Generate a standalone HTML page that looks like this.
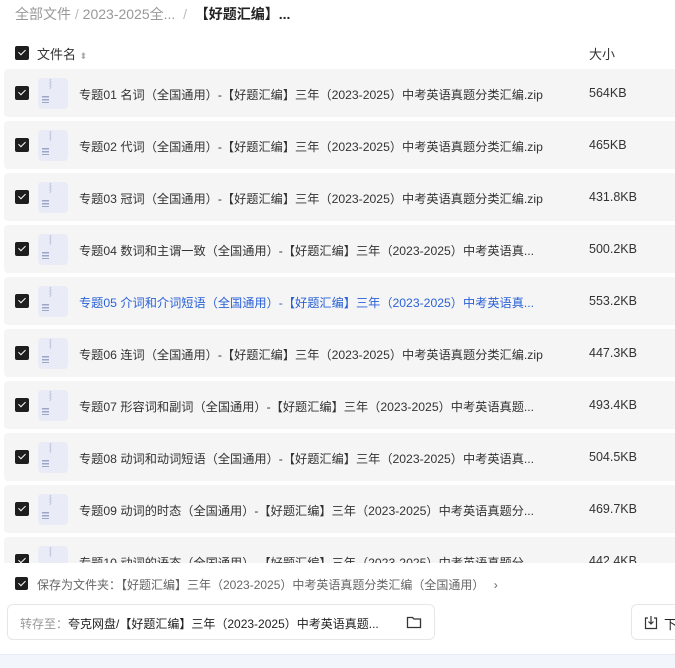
<!DOCTYPE html>
<html><head><meta charset="utf-8"><style>
*{margin:0;padding:0;box-sizing:border-box}
body{width:675px;height:668px;overflow:hidden;background:#fff;font-family:"Liberation Sans","Noto Sans CJK SC",sans-serif;position:relative;color:#333}
.bc{position:absolute;left:15px;top:4px;font-size:14px;color:#999;white-space:nowrap}
.bc b{color:#222;font-weight:bold}
.cb{position:absolute;width:14px;height:14px;background:#1e1e1e;border-radius:2px}
.cb:after{content:"";position:absolute;left:4.5px;top:2px;width:3px;height:6px;border:solid #fff;border-width:0 1.6px 1.6px 0;transform:rotate(45deg)}
.hdr{position:absolute;top:44px;font-size:13px;color:#333}
.row{position:absolute;left:4px;width:680px;height:48px;background:#f5f5f6;border-radius:4px}
.row .cb{left:11px;top:17px}
.ic{position:absolute;left:34px;top:9px;width:30px;height:31px;background:#e9ecf6;border-radius:4px}
.ic:before{content:"";position:absolute;left:4px;top:18px;width:7px;height:7px;background:repeating-linear-gradient(#9ca6c8 0 1.5px,transparent 1.5px 3px)}
.ic:after{content:"⸾";position:absolute;left:11px;top:0;font-size:8px;color:#9ca6c8}
.nm{position:absolute;left:75px;top:16px;font-size:12.2px;white-space:nowrap;color:#333}
.sz{position:absolute;left:585px;top:17px;font-size:12.5px;color:#333}
.foot{position:absolute;left:0;top:563px;width:675px;height:105px;background:#fff}
</style></head><body>
<div class="bc">全部文件 <span style="color:#bbb">/</span> 2023-2025全... <span style="color:#bbb">&nbsp;/&nbsp;</span> <b>【好题汇编】...</b></div>
<div class="cb" style="left:15px;top:46px"></div>
<div class="hdr" style="left:37px">文件名 <span style="color:#aaa;font-size:9px">⬍</span></div>
<div class="hdr" style="left:589px">大小</div>

<div class="row" style="top:69px"><div class="cb"></div><div class="ic"></div><div class="nm">专题01 名词（全国通用）-【好题汇编】三年（2023-2025）中考英语真题分类汇编.zip</div><div class="sz">564KB</div></div>
<div class="row" style="top:121px"><div class="cb"></div><div class="ic"></div><div class="nm">专题02 代词（全国通用）-【好题汇编】三年（2023-2025）中考英语真题分类汇编.zip</div><div class="sz">465KB</div></div>
<div class="row" style="top:173px"><div class="cb"></div><div class="ic"></div><div class="nm">专题03 冠词（全国通用）-【好题汇编】三年（2023-2025）中考英语真题分类汇编.zip</div><div class="sz">431.8KB</div></div>
<div class="row" style="top:225px"><div class="cb"></div><div class="ic"></div><div class="nm">专题04 数词和主谓一致（全国通用）-【好题汇编】三年（2023-2025）中考英语真...</div><div class="sz">500.2KB</div></div>
<div class="row" style="top:277px"><div class="cb"></div><div class="ic"></div><div class="nm" style="color:#2a62d6">专题05 介词和介词短语（全国通用）-【好题汇编】三年（2023-2025）中考英语真...</div><div class="sz">553.2KB</div></div>
<div class="row" style="top:329px"><div class="cb"></div><div class="ic"></div><div class="nm">专题06 连词（全国通用）-【好题汇编】三年（2023-2025）中考英语真题分类汇编.zip</div><div class="sz">447.3KB</div></div>
<div class="row" style="top:381px"><div class="cb"></div><div class="ic"></div><div class="nm">专题07 形容词和副词（全国通用）-【好题汇编】三年（2023-2025）中考英语真题...</div><div class="sz">493.4KB</div></div>
<div class="row" style="top:433px"><div class="cb"></div><div class="ic"></div><div class="nm">专题08 动词和动词短语（全国通用）-【好题汇编】三年（2023-2025）中考英语真...</div><div class="sz">504.5KB</div></div>
<div class="row" style="top:485px"><div class="cb"></div><div class="ic"></div><div class="nm">专题09 动词的时态（全国通用）-【好题汇编】三年（2023-2025）中考英语真题分...</div><div class="sz">469.7KB</div></div>
<div class="row" style="top:537px"><div class="cb"></div><div class="ic"></div><div class="nm">专题10 动词的语态（全国通用）-【好题汇编】三年（2023-2025）中考英语真题分...</div><div class="sz">442.4KB</div></div>

<div class="foot">
<div class="cb" style="left:15px;top:14px;width:13px;height:13px"></div>
<div style="position:absolute;left:37px;top:13px;font-size:12px;color:#666;white-space:nowrap">保存为文件夹：【好题汇编】三年（2023-2025）中考英语真题分类汇编（全国通用） <span style="margin-left:6px">›</span></div>
<div style="position:absolute;left:7px;top:41px;width:428px;height:36px;border:1px solid #e6e6e6;border-radius:6px;font-size:12px;padding:10px 0 0 12px;white-space:nowrap;color:#999">转存至：<span style="color:#222">夸克网盘/【好题汇编】三年（2023-2025）中考英语真题...</span>
<svg style="position:absolute;left:398px;top:10px" width="16" height="14" viewBox="0 0 16 14"><path d="M1.5 2.5h5l1.5 1.5h6.5v8.5h-13z" fill="none" stroke="#333" stroke-width="1.3"/></svg></div>
<div style="position:absolute;left:631px;top:41px;width:60px;height:36px;border:1px solid #e6e6e6;border-radius:6px;font-size:13px;padding:9px 0 0 32px;color:#222">下
<svg style="position:absolute;left:12px;top:10px" width="14" height="15" viewBox="0 0 14 15"><path d="M4 3H1.5v10.5h11V3H10M7 1v8M4.5 6.5L7 9l2.5-2.5" fill="none" stroke="#333" stroke-width="1.2"/></svg></div>
<div style="position:absolute;left:0;top:91px;width:675px;height:14px;background:#f2f5fc;border-top:1px solid #e8ebf3"></div>
</div>
</body></html>
